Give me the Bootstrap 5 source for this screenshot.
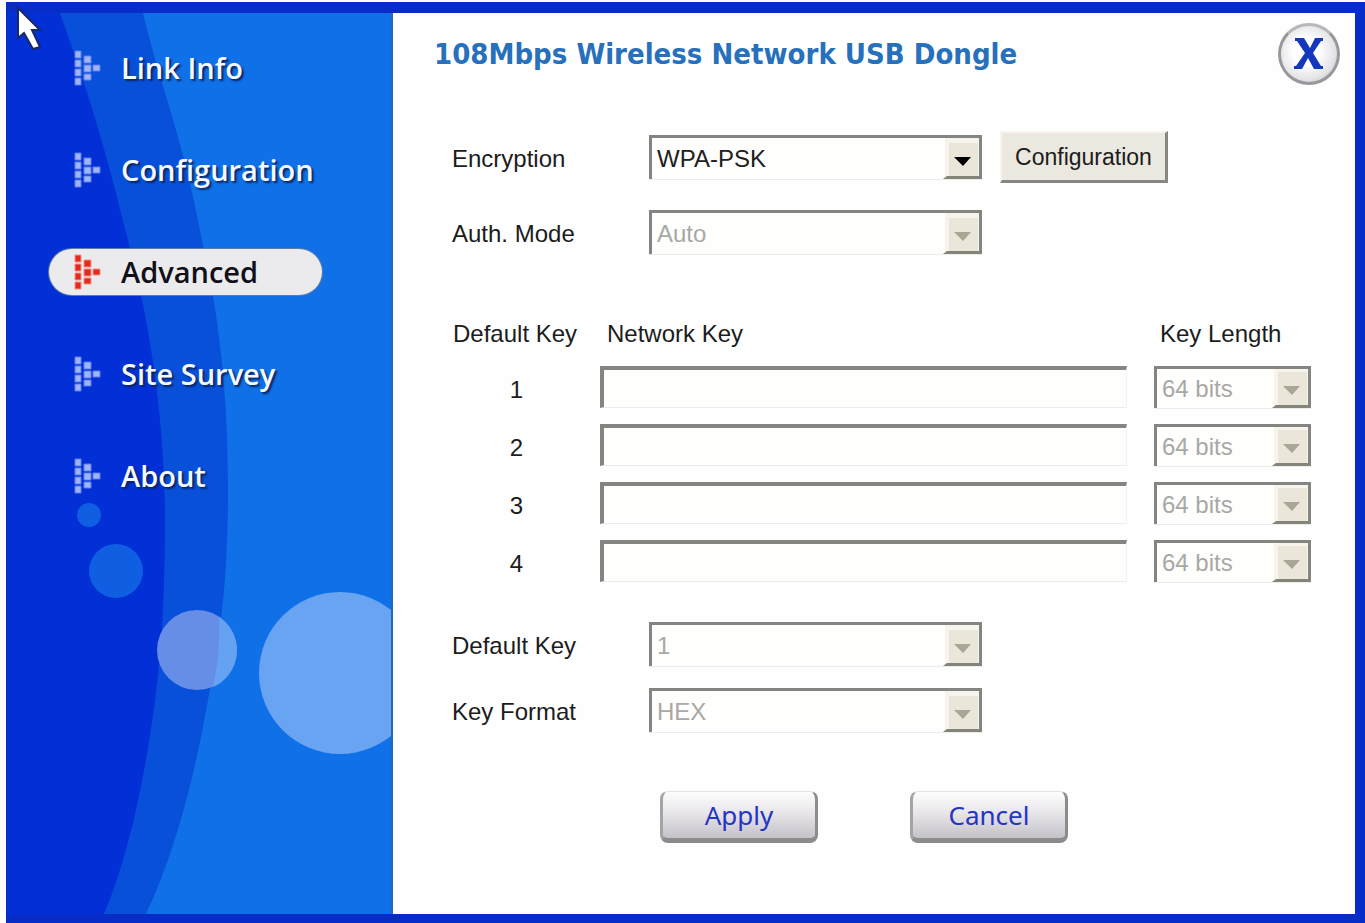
<!DOCTYPE html>
<html lang="en">
<head>
<meta charset="utf-8">
<meta name="viewport" content="width=device-width, initial-scale=1">
<title>108Mbps Wireless Network USB Dongle</title>
<link href="https://cdn.jsdelivr.net/npm/bootstrap@5.3.0/dist/css/bootstrap.min.css" rel="stylesheet">
<style>
  body { font-family: "Liberation Sans", sans-serif; font-size: 24px; line-height: 28px; color: #1c1c1c; background: #fff; padding: 2px 0 0 6px; }
  .app-window { min-height: calc(100vh - 2px); background: #fefefe; border: solid #082cc8; border-width: 11px 10px 9px 0; }
  .pointer { left: 14px; top: 4px; z-index: 5; }

  .side-panel { width: 387px; padding: 32px 0 0 43px; background: #0f70e8; border-right: 2px solid #2468b8; }
  .side-art { z-index: 0; }
  .side-nav { z-index: 1; gap: 56px; }
  .side-link { width: 273px; height: 46px; padding-left: 25px; gap: 20px; border-radius: 23px; color: #f4f8ff; font: 600 29px/40px "Open Sans", sans-serif; text-decoration: none; text-shadow: 2px 2px 2px #0a2460; }
  .side-link svg { fill: #a0b4f8; stroke: #5a7cec; }
  .side-link.active { background: #ebebed; color: #101018; text-shadow: none; box-shadow: 0 0 0 1px #5a7cb0; }
  .side-link.active svg { fill: #e02c20; stroke: #f89080; }

  .main-panel { padding: 10px 15px 32px 41px; min-width: 0; }
  .app-title { font: bold 29px/40px "DejaVu Sans Condensed", "DejaVu Sans", sans-serif; color: #2670bc; }
  .close-btn { width: 62px; height: 62px; border: 3px solid #98989c; border-top-color: #b8b8bc; background: radial-gradient(circle at 45% 45%, #fff 30%, #e4e4e8 65%, #b4b4b8 100%); }

  .settings { padding: 46px 29px 0 18px; }
  .field-label { width: 197px; padding-top: 3px; }
  .gap-row { margin-top: 27px; }
  .xp-select, .xp-input { border: solid #848480; border-radius: 0; background-color: #fefefc; color: #202020; }
  .xp-select { width: 333px; height: 44px; padding: 0 42px 0 5px; border-width: 3px 3px 0 3px; appearance: none; font-size: 24px; box-shadow: 0 1px 0 #ececea;
    background-repeat: no-repeat; background-position: right bottom;
    background-image: url("data:image/svg+xml,%3Csvg xmlns='http://www.w3.org/2000/svg' width='36' height='41'%3E%3Cpath fill='%23f6f4ec' d='M2 0h34v41H2z'/%3E%3Cpath fill='%23eae7da' d='M6 5h29v33H6z'/%3E%3Cpath fill='%23848478' d='M0 41l4-3h32v3z'/%3E%3Cpath d='M11 19h17l-8 9z'/%3E%3C/svg%3E"); }
  .xp-select:disabled { color: #a8a8a4; opacity: 1;
    background-image: url("data:image/svg+xml,%3Csvg xmlns='http://www.w3.org/2000/svg' width='36' height='41'%3E%3Cpath fill='%23f6f4ec' d='M2 0h34v41H2z'/%3E%3Cpath fill='%23eae7da' d='M6 5h29v33H6z'/%3E%3Cpath fill='%23848478' d='M0 41l4-3h32v3z'/%3E%3Cpath fill='%23a8a694' d='M11 19h17l-8 9z'/%3E%3C/svg%3E"); }
  .key-length { width: 157px; height: 42px; }
  .xp-input { height: 42px; width: 100%; padding: 0 8px; border-width: 4px 1px 1px 4px; border-right-color: #f2f2f0; border-bottom-color: #ececea; display: block; }
  .xp-button { width: 168px; height: 52px; margin-left: 18px; padding: 0; border: solid #868682; border-width: 2px 3px 3px 2px; border-top-color: #f6f5f0; border-left-color: #f6f5f0; background: #eae8df; color: #1c1c1c; font-size: 23px; }

  .key-grid { margin-top: 56px; width: 100%; table-layout: fixed; }
  .key-grid th { height: 48px; font-weight: normal; white-space: nowrap; }
  .key-grid td { height: 58px; }
  .col-index { width: 147px; }
  .col-length { width: 183px; }
  .key-grid .index-cell { padding: 5px 18px 0 0; }
  .key-grid .length-cell { padding-left: 26px; }
  .key-options { margin-top: 32px; gap: 22px; }

  .actions { margin-top: 59px; padding-left: 208px; gap: 92px; }
  .gloss-btn { width: 158px; height: 52px; padding: 0; border: solid #8c8c8c; border-width: 1px 3px 5px 3px; border-top-color: #e4e4e4; border-left-color: #a4a4a6; border-radius: 8px; background: linear-gradient(#fdfdfd, #e8e6e9 45%, #c4c2c8); color: #2434c4; font: 26px/36px "Noto Sans", sans-serif; }
</style>
</head>
<body>
<svg class="pointer position-absolute" width="30" height="50" viewBox="14 4 30 50" aria-hidden="true">
  <path d="M18 8V38L24 33L33 49L40 47L32 30H40Z" fill="#fff" stroke="#182868" stroke-width="2"/>
</svg>
<svg class="d-none" aria-hidden="true">
  <symbol id="dots" viewBox="0 0 27 36">
    <path d="M1 1h6v7H1zM1 10h6v7H1zM1 19h6v7H1zM1 28h6v7H1zM10 6h7v7h-7zM10 15h7v7h-7zM10 24h7v6h-7zM19 15h7v6h-7z"/>
  </symbol>
</svg>

<div class="app-window d-flex">
  <aside class="side-panel position-relative flex-shrink-0 overflow-hidden">
    <svg class="side-art position-absolute top-0 start-0 w-100 h-100" viewBox="6 13 385 901" preserveAspectRatio="none" aria-hidden="true">
      <path fill="#0850da" d="M6 13H143C162 92 184 140 203 245C222 330 228 410 228 490C228 570 222 630 208 700C194 780 174 855 146 914H6Z"/>
      <path fill="#0230d6" d="M6 13H60C80 70 100 125 128 240C152 330 165 430 165 520C165 590 162 665 150 735C140 800 125 865 104 914H6Z"/>
      <circle cx="89" cy="515" r="12" fill="#105ee2"/>
      <circle cx="116" cy="571" r="27" fill="#105ee2"/>
      <circle cx="197" cy="650" r="40" fill="#668ee6"/>
      <path fill="#66a2f2" d="M219 617A40 40 0 0 1 213 687Q221 650 219 617Z"/>
      <circle cx="340" cy="673" r="81" fill="#68a4f2"/>
    </svg>
    <nav class="side-nav position-relative d-flex flex-column">
      <a class="side-link d-flex align-items-center" href="#"><svg width="27" height="36" aria-hidden="true"><use href="#dots"/></svg>Link Info</a>
      <a class="side-link d-flex align-items-center" href="#"><svg width="27" height="36" aria-hidden="true"><use href="#dots"/></svg>Configuration</a>
      <a class="side-link d-flex align-items-center active" href="#" aria-current="page"><svg width="27" height="36" aria-hidden="true"><use href="#dots"/></svg>Advanced</a>
      <a class="side-link d-flex align-items-center" href="#"><svg width="27" height="36" aria-hidden="true"><use href="#dots"/></svg>Site Survey</a>
      <a class="side-link d-flex align-items-center" href="#"><svg width="27" height="36" aria-hidden="true"><use href="#dots"/></svg>About</a>
    </nav>
  </aside>

  <main class="main-panel flex-grow-1">
    <header class="d-flex justify-content-between align-items-center">
      <h1 class="app-title m-0">108Mbps Wireless Network USB Dongle</h1>
      <button type="button" class="close-btn rounded-circle p-0 d-flex align-items-center justify-content-center flex-shrink-0" aria-label="Close">
        <svg width="32" height="32" viewBox="0 0 32 32" aria-hidden="true"><path fill="#1438bc" d="M2 0H11L17 10L22 0H30V3H28L20 15L28 28H30V31H21L15 20L9 31H1V28H3L12 15L4 3H2Z"/></svg>
      </button>
    </header>

    <form class="settings">
      <div class="d-flex align-items-center">
        <label class="field-label" for="encryption">Encryption</label>
        <select class="xp-select" id="encryption"><option>WPA-PSK</option></select>
        <button type="button" class="xp-button">Configuration</button>
      </div>
      <div class="gap-row d-flex align-items-center">
        <label class="field-label" for="auth">Auth. Mode</label>
        <select class="xp-select" id="auth" disabled><option>Auto</option></select>
      </div>

      <table class="key-grid">
        <colgroup><col class="col-index"><col><col class="col-length"></colgroup>
        <thead>
          <tr><th>Default Key</th><th class="ps-2">Network Key</th><th class="ps-4" id="keylen"><span class="ms-2">Key Length</span></th></tr>
        </thead>
        <tbody>
          <tr><td class="index-cell text-center"><label for="k1">1</label></td><td><input class="xp-input" id="k1" type="text"></td><td class="length-cell"><select class="xp-select key-length d-block" aria-labelledby="keylen" disabled><option>64 bits</option></select></td></tr>
          <tr><td class="index-cell text-center"><label for="k2">2</label></td><td><input class="xp-input" id="k2" type="text"></td><td class="length-cell"><select class="xp-select key-length d-block" aria-labelledby="keylen" disabled><option>64 bits</option></select></td></tr>
          <tr><td class="index-cell text-center"><label for="k3">3</label></td><td><input class="xp-input" id="k3" type="text"></td><td class="length-cell"><select class="xp-select key-length d-block" aria-labelledby="keylen" disabled><option>64 bits</option></select></td></tr>
          <tr><td class="index-cell text-center"><label for="k4">4</label></td><td><input class="xp-input" id="k4" type="text"></td><td class="length-cell"><select class="xp-select key-length d-block" aria-labelledby="keylen" disabled><option>64 bits</option></select></td></tr>
        </tbody>
      </table>

      <div class="key-options d-flex flex-column">
        <div class="d-flex align-items-center">
          <label class="field-label" for="defkey">Default Key</label>
          <select class="xp-select" id="defkey" disabled><option>1</option></select>
        </div>
        <div class="d-flex align-items-center">
          <label class="field-label" for="format">Key Format</label>
          <select class="xp-select" id="format" disabled><option>HEX</option></select>
        </div>
      </div>

      <div class="actions d-flex">
        <button type="button" class="gloss-btn">Apply</button>
        <button type="button" class="gloss-btn">Cancel</button>
      </div>
    </form>
  </main>
</div>
<script src="https://cdn.jsdelivr.net/npm/bootstrap@5.3.0/dist/js/bootstrap.bundle.min.js"></script>
</body>
</html>
